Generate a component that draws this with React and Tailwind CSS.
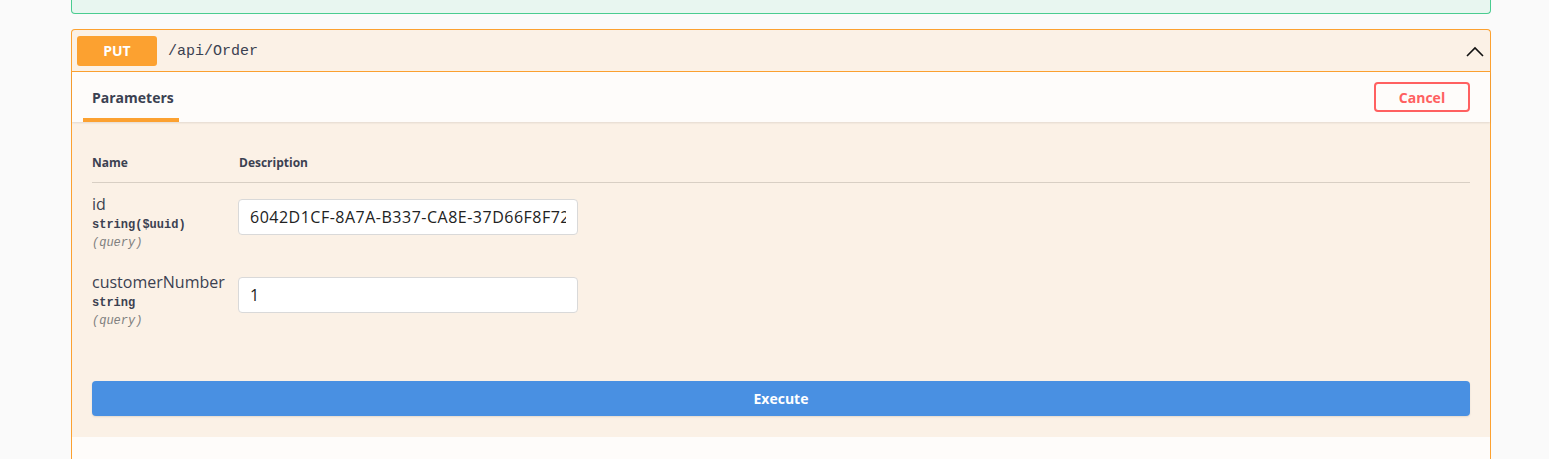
import React from "react";

const sans = { fontFamily: '"Open Sans", "Noto Sans", sans-serif' };
const mono = { fontFamily: '"Liberation Mono", "DejaVu Sans Mono", monospace' };

const params = [
  { name: "id", type: "string($uuid)", value: "6042D1CF-8A7A-B337-CA8E-37D66F8F7268" },
  { name: "customerNumber", type: "string", value: "1" },
];

function ParamRow({ p }) {
  return (
    <div className="flex pb-[9px]">
      <div className="w-[146px] shrink-0 pt-[11px]">
        <div className="text-[16px] leading-[20px] text-[#3b4151]">{p.name}</div>
        <div className="mt-[2px] text-[12px] font-bold leading-[18px] text-[#3b4151]" style={mono}>
          {p.type}
        </div>
        <div className="text-[12px] italic leading-[18px] text-[#808080]" style={mono}>
          (query)
        </div>
      </div>
      <div className="pt-[16px]">
        <input
          readOnly
          value={p.value}
          className="h-[36px] w-[340px] rounded-[4px] border border-[#d9d9d9] bg-white px-[11px] text-[16px] tracking-[0.5px] text-[#222] outline-none"
          style={sans}
        />
      </div>
    </div>
  );
}

export default function App() {
  return (
    <div className="min-h-[459px] w-full overflow-hidden bg-[#fafafa]" style={sans}>
      <div className="ml-[71px] w-[1420px]">
        <div className="h-[14px] rounded-b-[4px] border-x border-b border-[#49cc90] bg-[#e8f6f0]" />

        <div className="mt-[15px] rounded-t-[4px] border border-b-0 border-[#fca130] bg-[#fbf1e6]">
          {/* summary */}
          <div className="flex h-[42px] items-center border-b border-[#fca130] px-[5px]">
            <div className="flex h-[30px] w-[80px] items-center justify-center rounded-[3px] bg-[#fca130] text-[14px] font-bold text-white">
              PUT
            </div>
            <div className="ml-[11px] pt-[4px] text-[15px] text-[#3b4151]" style={mono}>
              /api/Order
            </div>
            <svg className="ml-auto mr-[1px] mt-[2px]" width="18" height="12" viewBox="0 0 18 12">
              <polyline points="1,10 9,2 17,10" fill="none" stroke="#111" strokeWidth="1.6" />
            </svg>
          </div>

          {/* tab header */}
          <div className="relative flex h-[50px] items-center bg-[#fefcfa] pl-[11px] pr-[20px] shadow-[0_1px_2px_rgba(0,0,0,0.1)]">
            <div className="relative flex h-full w-[96px] items-center px-[9px]">
              <span className="text-[14px] font-bold text-[#3b4151]">Parameters</span>
              <div className="absolute bottom-0 left-0 h-[4px] w-full bg-[#fca130]" />
            </div>
            <button className="ml-auto flex h-[30px] w-[96px] items-center justify-center rounded-[4px] border-2 border-[#ff6060] bg-transparent text-[14px] font-bold text-[#ff6060]">
              Cancel
            </button>
          </div>

          {/* params */}
          <div className="px-[20px] pb-[21px]">
            <div className="flex border-b border-[#d8cfc4] pb-[10px] pt-[32px] text-[12px] font-bold leading-[18px] text-[#3b4151]">
              <div className="w-[147px]">Name</div>
              <div>Description</div>
            </div>
            {params.map((p) => (
              <ParamRow key={p.name} p={p} />
            ))}
            <button className="mt-[42px] flex h-[35px] w-full items-center justify-center rounded-[4px] bg-[#4990e2] text-[14px] font-bold text-white shadow-[0_1px_2px_rgba(0,0,0,0.1)]">
              Execute
            </button>
          </div>

          {/* responses */}
          <div className="h-[60px] bg-[#fefcfa] px-[20px] pt-[16px]">
            <span className="text-[14px] font-bold text-[#3b4151]">Responses</span>
          </div>
        </div>
      </div>
    </div>
  );
}
